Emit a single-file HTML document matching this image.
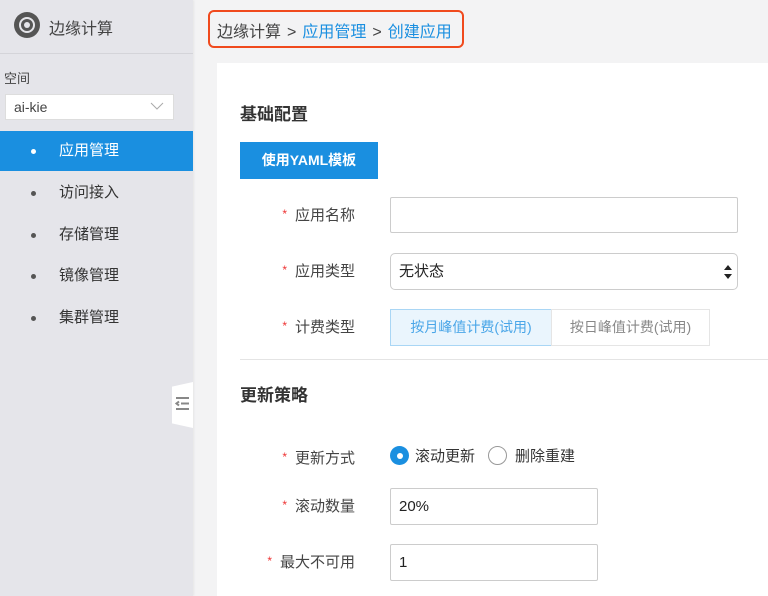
<!DOCTYPE html>
<html><head><meta charset="utf-8"><style>
*{margin:0;padding:0;box-sizing:border-box}
body{width:768px;height:596px;overflow:hidden;background:#f3f3f4;font-family:"Liberation Sans","Noto Sans CJK SC",sans-serif;position:relative;color:#333}
.side{position:absolute;left:0;top:0;width:193px;height:596px;background:#e5e5ea;box-shadow:1px 0 2px rgba(0,0,0,.06)}
.logo{position:absolute;left:14px;top:12px;width:26px;height:26px;border-radius:50%;background:#555}
.logo:before{content:"";position:absolute;left:5px;top:5px;width:12px;height:12px;border:2px solid #e5e5ea;border-radius:50%}
.logo:after{content:"";position:absolute;left:10px;top:10px;width:6px;height:6px;background:#e5e5ea;border-radius:50%}
.t{position:absolute;white-space:nowrap}
.hr{position:absolute;left:0;top:53px;width:193px;height:1px;background:#d4d4d9}
.sel{position:absolute;left:5px;top:94px;width:169px;height:26px;background:#fff;border:1px solid #ddd;font-size:14px;padding:4px 8px;color:#444}
.nav{position:absolute;left:0;width:193px;height:40px;font-size:15px;color:#333;padding-left:59px;line-height:40px}
.nav:before{content:"";position:absolute;left:31px;top:18px;width:5px;height:5px;border-radius:50%;background:#555}
.nav.on{background:#1a8fe0;color:#fff}
.nav.on:before{background:#fff}
.card{position:absolute;left:217px;top:63px;width:551px;height:533px;background:#fff}
.lbl{position:absolute;font-size:15px;color:#444;text-align:right;width:120px;left:235px}
.lbl b{color:#e33;font-weight:normal;font-size:12px;margin-right:8px;vertical-align:2px}
.in{position:absolute;border:1px solid #ccc;border-radius:2px;background:#fff;font-size:15px;padding:0 8px;color:#222}
.g{margin:0 6px}
</style></head><body>
<div class="side">
<div class="logo"></div>
<div class="t" style="left:49px;top:15px;font-size:16px;color:#444">边缘计算</div>
<div class="hr"></div>
<div class="t" style="left:4px;top:68px;font-size:13px;color:#444">空间</div>
<div class="sel">ai-kie<svg style="position:absolute;right:9px;top:7px" width="14" height="9"><path d="M1 1l6 6 6-6" stroke="#aaa" fill="none"/></svg></div>
<div class="nav on" style="top:131px">应用管理</div>
<div class="nav" style="top:173px">访问接入</div>
<div class="nav" style="top:215px">存储管理</div>
<div class="nav" style="top:256px">镜像管理</div>
<div class="nav" style="top:298px">集群管理</div>
</div>
<div style="position:absolute;left:172px;top:382px;width:21px;height:46px;background:#fff;clip-path:polygon(0 10%,100% 0,100% 100%,0 90%)"></div>
<svg style="position:absolute;left:175px;top:396px" width="15" height="16"><path d="M1 2h13M6 7.5h8M1 13h13M4 5.5L1.5 7.5 4 9.5" stroke="#888" stroke-width="2" fill="none"/></svg>
<div style="position:absolute;left:208px;top:10px;width:256px;height:38px;border:2px solid #f04a1d;border-radius:6px"></div>
<div class="t" style="left:217px;top:18px;font-size:16px;color:#444">边缘计算<span class="g">&gt;</span><span style="color:#1a8fe0">应用管理</span><span class="g">&gt;</span><span style="color:#1a8fe0">创建应用</span></div>
<div class="card"></div>
<div class="t" style="left:240px;top:100px;font-size:17px;font-weight:bold;color:#333">基础配置</div>
<div class="t" style="left:240px;top:142px;width:138px;height:37px;background:#1a8fe0;color:#fff;font-size:14px;font-weight:bold;text-align:center;line-height:37px">使用YAML模板</div>
<div class="lbl" style="top:204px"><b>*</b>应用名称</div>
<div class="in" style="left:390px;top:197px;width:348px;height:36px"></div>
<div class="lbl" style="top:260px"><b>*</b>应用类型</div>
<div class="in" style="left:390px;top:253px;width:348px;height:37px;border-radius:5px;line-height:35px">无状态<svg style="position:absolute;right:5px;top:11px" width="8" height="14"><path d="M4 0L8 5H0zM4 14L0 9h8z" fill="#222"/></svg></div>
<div class="lbl" style="top:316px"><b>*</b>计费类型</div>
<div class="t" style="left:390px;top:309px;width:162px;height:37px;border:1px solid #a9d6f5;background:#eaf5fd;color:#4aa6e8;font-size:14px;text-align:center;line-height:35px">按月峰值计费(试用)</div>
<div class="t" style="left:551px;top:309px;width:159px;height:37px;border:1px solid #e5e5e5;color:#888;font-size:14px;text-align:center;line-height:35px">按日峰值计费(试用)</div>
<div style="position:absolute;left:240px;top:359px;width:528px;height:1px;background:#e4e4e4"></div>
<div class="t" style="left:240px;top:381px;font-size:17px;font-weight:bold;color:#333">更新策略</div>
<div class="lbl" style="top:447px"><b>*</b>更新方式</div>
<div style="position:absolute;left:390px;top:446px;width:19px;height:19px;border-radius:50%;background:#1a8fe0"><div style="position:absolute;left:6.5px;top:6.5px;width:6px;height:6px;border-radius:50%;background:#fff"></div></div>
<div class="t" style="left:415px;top:445px;font-size:15px;color:#333">滚动更新</div>
<div style="position:absolute;left:488px;top:446px;width:19px;height:19px;border-radius:50%;border:1px solid #999"></div>
<div class="t" style="left:515px;top:445px;font-size:15px;color:#333">删除重建</div>
<div class="lbl" style="top:495px"><b>*</b>滚动数量</div>
<div class="in" style="left:390px;top:488px;width:208px;height:37px;line-height:35px">20%</div>
<div class="lbl" style="top:551px"><b>*</b>最大不可用</div>
<div class="in" style="left:390px;top:544px;width:208px;height:37px;line-height:35px">1</div>
</body></html>
